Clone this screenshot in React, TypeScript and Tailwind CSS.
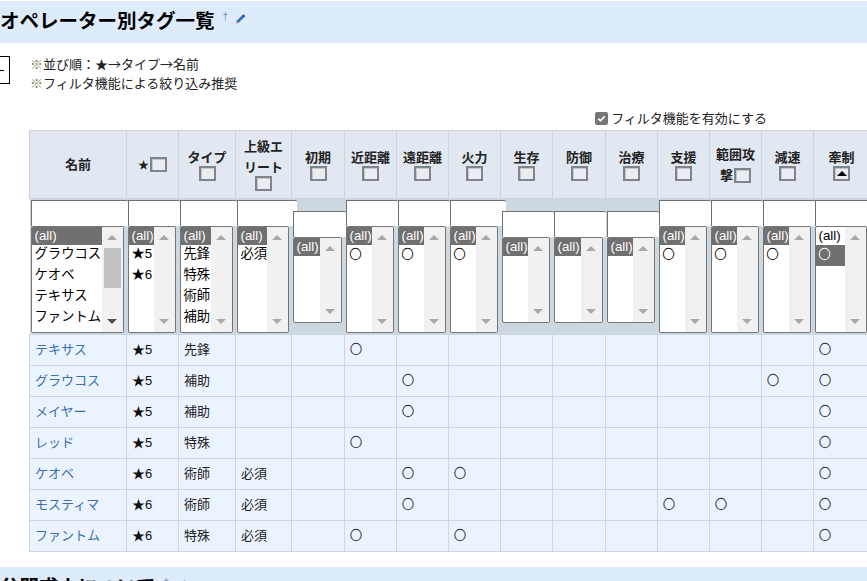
import React from "react";

type Col = {
  label: React.ReactNode;
  width: number;
  inputWidth: number;
  short?: boolean;
  options: string[];
};

const columns: Col[] = [
  { label: <>名前</>, width: 97, inputWidth: 97, options: ["グラウコス", "ケオベ", "テキサス", "ファントム"] },
  { label: <><span className="text-[11px]">★</span><SortBox inline /></>, width: 52, inputWidth: 52, options: ["★5", "★6"] },
  { label: <>タイプ<SortBox /></>, width: 57, inputWidth: 57, options: ["先鋒", "特殊", "術師", "補助"] },
  { label: <>上級エ<br />リート<SortBox /></>, width: 56, inputWidth: 60, options: ["必須"] },
  { label: <>初期<SortBox /></>, width: 53, inputWidth: 53, short: true, options: [] },
  { label: <>近距離<SortBox /></>, width: 52, inputWidth: 52, options: ["○"] },
  { label: <>遠距離<SortBox /></>, width: 52, inputWidth: 52, options: ["○"] },
  { label: <>火力<SortBox /></>, width: 52, inputWidth: 56, options: ["○"] },
  { label: <>生存<SortBox /></>, width: 52, inputWidth: 52, short: true, options: [] },
  { label: <>防御<SortBox /></>, width: 53, inputWidth: 52, short: true, options: [] },
  { label: <>治療<SortBox /></>, width: 52, inputWidth: 52, short: true, options: [] },
  { label: <>支援<SortBox /></>, width: 52, inputWidth: 52, options: ["○"] },
  { label: <>範囲攻<br />撃<SortBox inline /></>, width: 52, inputWidth: 52, options: ["○"] },
  { label: <>減速<SortBox /></>, width: 52, inputWidth: 53, options: ["○"] },
  { label: <>牽制<SortBox active /></>, width: 56, inputWidth: 56, options: ["○"] },
];

const rows: { name: string; star: string; type: string; elite?: boolean; marks: number[] }[] = [
  { name: "テキサス", star: "★5", type: "先鋒", marks: [5, 14] },
  { name: "グラウコス", star: "★5", type: "補助", marks: [6, 13, 14] },
  { name: "メイヤー", star: "★5", type: "補助", marks: [6, 14] },
  { name: "レッド", star: "★5", type: "特殊", marks: [5, 14] },
  { name: "ケオベ", star: "★6", type: "術師", elite: true, marks: [6, 7, 14] },
  { name: "モスティマ", star: "★6", type: "術師", elite: true, marks: [6, 11, 12, 14] },
  { name: "ファントム", star: "★6", type: "特殊", elite: true, marks: [5, 7, 14] },
];

function SortBox({ inline, active }: { inline?: boolean; active?: boolean }) {
  return (
    <span
      className={`${inline ? "inline-flex ml-[1px] align-[-3px]" : "flex mx-auto -mt-[2px] mb-[2px]"} w-[17px] h-[15px] items-center justify-center border-2 border-[#7f8488] bg-[#e9edf2] shadow-[inset_1px_1px_0_#c4c8cc]`}
    >
      {active && <span className="w-0 h-0 border-x-[5px] border-x-transparent border-b-[5px] border-b-black" />}
    </span>
  );
}

function Pencil({ className }: { className?: string }) {
  return (
    <svg viewBox="0 0 12 12" className={className}>
      <path d="M1 11l.8-3L8.4 1.4a1.2 1.2 0 0 1 1.7 0l.5.5a1.2 1.2 0 0 1 0 1.7L4 10.2z" fill="#2f6fc4" />
      <path d="M1 11l.8-3 2.2 2.2z" fill="#e9a15c" />
      <path d="M8.2 1.6l2.2 2.2" stroke="#16345f" strokeWidth="1" />
    </svg>
  );
}

function Heading({ title }: { title: string }) {
  return (
    <div className="h-[42px] mt-px pb-[2px] bg-[#deebfb] flex items-center">
      <h2 className="text-[19.5px] leading-[28px] font-bold text-black">{title}</h2>
      <span className="ml-[8px] -mt-[8px] text-[10px] leading-none text-[#6a93bd]">†</span>
      <Pencil className="ml-[7px] -mt-[5px] w-[11px] h-[12px]" />
    </div>
  );
}

function ListBox({ col, index }: { col: Col; index: number }) {
  const isLast = index === columns.length - 1;
  const hasThumb = index === 0;
  return (
    <div
      className={`${col.short ? "h-[86px]" : "h-[107px]"} w-full flex overflow-hidden rounded-[2px] border border-[#767676] bg-white`}
    >
      <div className="flex-1 min-w-0 text-[13.33px] text-black font-normal text-left">
        <div className={`h-[18px] leading-[17px] px-[3px] whitespace-nowrap ${isLast ? "" : "bg-[#707070] text-white"}`}>(all)</div>
        {col.options.map((o) => (
          <div
            key={o}
            className={`h-[21px] leading-[17px] px-[3px] whitespace-nowrap ${o === "○" ? "font-['Noto_Sans_CJK_JP'] text-[12px] [-webkit-text-stroke:0.3px]" : ""} ${isLast ? "bg-[#707070] text-white" : ""}`}
          >
            {o}
          </div>
        ))}
      </div>
      <div className="w-[21px] shrink-0 bg-[#f1f1f1] relative flex flex-col items-center justify-between py-[8px]">
        <span className="w-0 h-0 border-x-[5px] border-x-transparent border-b-[5px] border-b-[#a8a8a8]" />
        {hasThumb && <span className="absolute left-[2px] right-[2px] top-[21px] h-[40px] bg-[#c1c1c1]" />}
        <span
          className={`w-0 h-0 border-x-[5px] border-x-transparent border-t-[5px] ${hasThumb ? "border-t-[#505050]" : "border-t-[#a8a8a8]"}`}
        />
      </div>
    </div>
  );
}

export default function App() {
  const tableWidth = columns.reduce((s, c) => s + c.width, 0);
  return (
    <div
      className="w-[867px] h-[581px] overflow-hidden bg-white text-[13px] text-[#222]"
      style={{ fontFamily: '"Liberation Sans", "Noto Sans CJK JP", sans-serif' }}
    >
      <Heading title="オペレーター別タグ一覧" />

      <div className="flex mt-[13px] h-[63px]">
        <div className="w-[10px] h-[28px] border border-l-0 border-black flex items-center justify-start shrink-0">
          <span className="w-[4px] h-px bg-black" />
        </div>
        <div className="ml-[20px] -mt-[2px] leading-[19px] font-['Noto_Sans_CJK_JP']">
          <p><span className="text-[#85855c]">※</span>並び順：★→タイプ→名前</p>
          <p><span className="text-[#85855c]">※</span>フィルタ機能による絞り込み推奨</p>
        </div>
      </div>

      <div className="w-[767px] flex justify-end items-center h-[17px] -mt-[9px] mb-[3px]">
        <span className="w-[13px] h-[13px] rounded-[2px] bg-[#767676] flex items-center justify-center mr-[3px]">
          <svg viewBox="0 0 12 12" className="w-[11px] h-[11px]">
            <path d="M2.5 6.2l2.4 2.4 4.6-5" fill="none" stroke="#fff" strokeWidth="1.8" />
          </svg>
        </span>
        <span>フィルタ機能を有効にする</span>
      </div>

      <div className="pl-[29px]">
        <table className="table-fixed border-collapse" style={{ width: tableWidth }}>
          <colgroup>
            {columns.map((c, i) => (
              <col key={i} style={{ width: c.width }} />
            ))}
          </colgroup>
          <thead>
            <tr className="h-[68px] bg-[#e1e8f1]">
              {columns.map((c, i) => (
                <th key={i} className="border border-[#cbd5e1] px-0 text-center align-middle font-bold text-[13px] leading-[21px] text-[#222]">
                  {c.label}
                </th>
              ))}
            </tr>
            <tr className="h-[135px] bg-[#cdd7df]">
              {columns.map((c, i) => (
                <th key={i} className="pl-[1px] pr-[3px] py-px align-middle font-normal">
                  <div className="flex flex-col items-start">
                    <div
                      className="h-[26px] shrink-0 bg-white border-l border-t border-[#6f6f6f] rounded-tr-[2px] relative"
                      style={{ width: c.inputWidth }}
                    />
                    <ListBox col={c} index={i} />
                  </div>
                </th>
              ))}
            </tr>
          </thead>
          <tbody>
            {rows.map((r) => (
              <tr key={r.name} className="h-[31px] bg-[#ebf3ff]">
                <td className="border border-[#cbd5e3] pl-[5px] text-[#3a6fb0]">{r.name}</td>
                <td className="border border-[#cbd5e3] pl-[5px] text-[#111]">{r.star}</td>
                <td className="border border-[#cbd5e3] pl-[5px]">{r.type}</td>
                <td className="border border-[#cbd5e3] pl-[5px]">{r.elite ? "必須" : ""}</td>
                {columns.slice(4).map((_, i) => (
                  <td key={i} className="border border-[#cbd5e3] pl-[5px] pb-[2px] font-['Noto_Sans_CJK_JP'] text-[12px] text-[#222] [-webkit-text-stroke:0.3px]">
                    {r.marks.includes(i + 4) ? "○" : ""}
                  </td>
                ))}
              </tr>
            ))}
          </tbody>
        </table>
      </div>

      <div className="mt-[15px]">
        <Heading title="公開求人について" />
      </div>
    </div>
  );
}
